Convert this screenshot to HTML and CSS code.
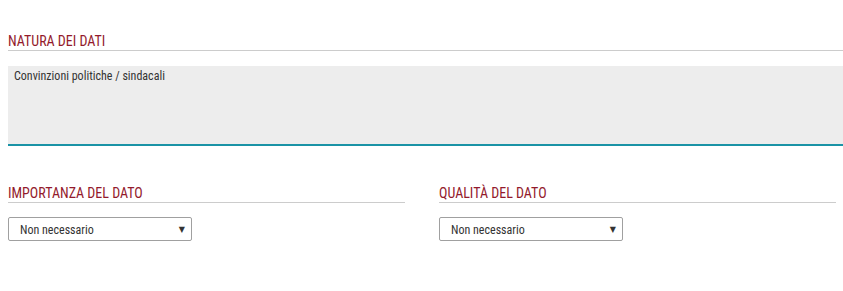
FILE: index.html
```html
<!DOCTYPE html>
<html lang="it">
<head>
<meta charset="utf-8">
<title>Dati</title>
<link rel="stylesheet" href="styles.css">
</head>
<body>
<div class="page">
  <section class="field field-full">
    <h3 class="field-title">NATURA DEI DATI</h3>
    <div class="textarea">Convinzioni politiche / sindacali</div>
  </section>
  <div class="row">
    <section class="field">
      <h3 class="field-title">IMPORTANZA DEL DATO</h3>
      <div class="select"><span>Non necessario</span><span class="arrow">▼</span></div>
    </section>
    <section class="field">
      <h3 class="field-title">QUALITÀ DEL DATO</h3>
      <div class="select"><span>Non necessario</span><span class="arrow">▼</span></div>
    </section>
  </div>
</div>
</body>
</html>
```
FILE: styles.css
```css
html, body {
  margin: 0;
  padding: 0;
  background: #ffffff;
}
body {
  font-family: "Liberation Sans Narrow", "Roboto Condensed", "Liberation Sans", sans-serif;
  color: #333333;
}
.page {
  padding: 33px 0 0 8px;
}
.field-title {
  margin: 0;
  font-size: 14px;
  font-weight: normal;
  line-height: 16px;
  color: #931a2c;
  padding-bottom: 1px;
  border-bottom: 1px solid #cccccc;
}
.textarea {
  margin-top: 15px;
  height: 75px;
  background: #ededed;
  border-bottom: 2px solid #1a93a6;
  font-size: 12px;
  line-height: 14px;
  padding: 3px 6px 0;
}
.row {
  display: grid;
  grid-template-columns: 397px 397px;
  column-gap: 34px;
  margin-top: 39px;
}
.select {
  margin-top: 14px;
  display: flex;
  align-items: center;
  justify-content: space-between;
  padding: 1px 0 0 11px;
  font-size: 12px;
  color: #333333;
  box-sizing: border-box;
  height: 24px;
  width: 184px;
  border: 1px solid #a0a0a0;
  border-radius: 2px;
}
.arrow {
  font-family: "DejaVu Sans", sans-serif;
  font-size: 8px;
  margin-right: 6px;
  color: #333333;
}
```
